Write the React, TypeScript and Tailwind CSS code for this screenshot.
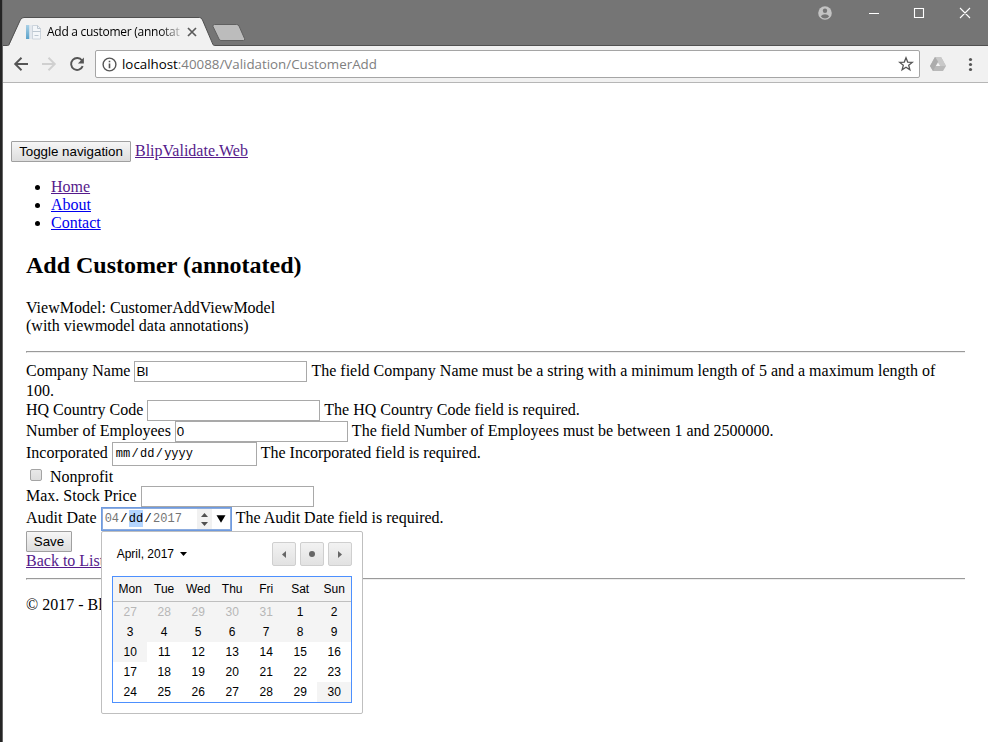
import React from "react";

const SERIF = "font-['Liberation_Serif',serif] text-[16px] leading-[18px]";
const SANS = "font-['Liberation_Sans',sans-serif]";
const MONO = "font-['Liberation_Mono',monospace] text-[12px] leading-[17px]";

const weekdays = ["Mon", "Tue", "Wed", "Thu", "Fri", "Sat", "Sun"];
const days = [
  27, 28, 29, 30, 31, 1, 2, 3, 4, 5, 6, 7, 8, 9, 10, 11, 12, 13, 14, 15, 16, 17,
  18, 19, 20, 21, 22, 23, 24, 25, 26, 27, 28, 29, 30,
];

function TitleBar() {
  return (
    <div className="relative flex h-[46px] shrink-0 bg-[#757575]">
      <svg className="absolute inset-0" width="985" height="46" viewBox="3 0 985 46">
        <path d="M3 45.500H9L20.500 19.500Q21.500 17.500 24 17.500H199Q201.300 17.500 202.200 19.500L213.500 45.500H988V47H3Z" fill="#f1f1f1" />
        <path d="M3 45.500H7.500Q8.500 45.500 9 44.500L20.300 20Q21.400 17.500 24 17.500H199.500Q201.500 17.500 202.500 20L212.800 44.200Q213.300 45.500 214.800 45.500H988" fill="none" stroke="#505050" />
        <path d="M214.500 24.500H236.500Q238.300 24.500 239 26L244.500 38.500Q245.200 40.500 243.500 40.500H221Q219.500 40.500 219 39L213 26.500Q212.300 24.500 214.500 24.500Z" fill="#bcbcbc" stroke="#606060" />
      </svg>
      <div className="relative flex w-[215px] pl-[22px] pt-[23px]">
        <svg width="18" height="18" viewBox="0 0 18 18" className="shrink-0">
          <defs>
            <linearGradient id="page" x1="0" x2="0" y1="0" y2="1">
              <stop offset="0" stopColor="#a9d0e6" />
              <stop offset="1" stopColor="#5aa2ca" />
            </linearGradient>
          </defs>
          <rect x="1" y="2" width="3.500" height="14" fill="url(#page)" />
          <path d="M4.500 2h5v14h-5z" fill="#e3e8ee" />
          <path d="M7.500 2.500h5l3 3v10.500h-8z" fill="#f3f6f9" stroke="#ccd4dc" />
          <path d="M12.500 2.500v3h3M7.500 8.500h8M9.500 12.500h4" fill="none" stroke="#bcc7d1" />
        </svg>
        <span className="ml-[4px] mt-px h-4 w-[134px] overflow-hidden whitespace-nowrap bg-gradient-to-r from-black from-82% to-[#ccc] bg-clip-text font-['Open_Sans',sans-serif] text-[12px] leading-4 tracking-[-0.27px] text-transparent">
          Add a customer (annotat
        </span>
        <svg width="10" height="10" viewBox="0 0 10 10" className="ml-[6px] mt-[4px]">
          <path d="M1 1l8 8M9 1l-8 8" stroke="#5a5a5a" strokeWidth="1.700" />
        </svg>
      </div>
      <svg className="relative ml-auto mr-[17px] mt-[5px]" width="154" height="16" viewBox="817 5 154 16">
        <circle cx="825" cy="13" r="6.800" fill="#c3c3c3" />
        <circle cx="825" cy="10.700" r="2.200" fill="#757575" />
        <path d="M820.800 16.200q1.500-2 4.200-2t4.200 2q-1.500 2.200-4.200 2.200t-4.200-2.200z" fill="#757575" />
        <path d="M869 13.500h10M914.500 8.500h9v9h-9zM960 8l10 10M970 8l-10 10" fill="none" stroke="#fff" strokeWidth="1.100" />
      </svg>
    </div>
  );
}

function Toolbar() {
  return (
    <div className="flex h-[37px] shrink-0 items-start border-b border-[#b6b6b6] bg-[#f1f1f1] pt-[4px]">
      <svg width="92" height="28" viewBox="3 50 92 28" fill="none" strokeWidth="1.900">
        <path d="M28 64H15.500M21.500 57.800L15.200 64l6.300 6.200" stroke="#555" />
        <path d="M42 64h12.500M48.500 57.800l6.300 6.200-6.300 6.200" stroke="#d0d0d0" />
        <path d="M82 60.500A6 6 0 1 0 82.700 66.200" stroke="#555" />
        <path d="M83.900 57.500v6h-6z" fill="#555" />
      </svg>
      <div className="flex h-7 w-[825px] items-center rounded-[2px] border border-[#a5a5a5] bg-white">
        <svg className="ml-[6px]" width="15" height="15" viewBox="0 0 15 15">
          <circle cx="7.500" cy="7.500" r="6.400" fill="none" stroke="#555" strokeWidth="1.400" />
          <path d="M7.500 6.500v4.700M7.500 3.700v1.600" stroke="#555" strokeWidth="1.600" />
        </svg>
        <span className="ml-[5px] whitespace-nowrap font-['Open_Sans',sans-serif] text-[13.333px] leading-5 text-[#808080]">
          <span className="text-black">localhost</span>:40088/Validation/CustomerAdd
        </span>
        <svg className="ml-auto mr-[5px]" width="16" height="16" viewBox="0 0 16 16">
          <path d="M8 1.800l1.700 4.300 4.600.3-3.600 2.900 1.200 4.500L8 11.300l-3.900 2.500 1.200-4.500L1.700 6.400l4.600-.3z" fill="none" stroke="#555" strokeWidth="1.300" />
        </svg>
      </div>
      <svg className="ml-[8px]" width="50" height="28" viewBox="928 50 50 28">
        <path d="M935 57h6l5 9-3 5h-10l-3-5z" fill="#b9b9b9" />
        <path d="M935 57h6l5 9h-6z" fill="#c9c9c9" />
        <path d="M935 57l3 4.500-5 9.500-3-5z" fill="#acacac" />
        <path d="M938 62.500l2.200 3.500h-4.400z" fill="#f4f4f4" />
        <g fill="#555">
          <circle cx="970.500" cy="59.500" r="1.600" />
          <circle cx="970.500" cy="64.500" r="1.600" />
          <circle cx="970.500" cy="69.500" r="1.600" />
        </g>
      </svg>
    </div>
  );
}

function Button({ label, className }: { label: string; className: string }) {
  return (
    <button className={`${SANS} ${className} h-[21px] rounded-[1px] border border-[#a0a0a0] bg-gradient-to-b from-[#f6f6f6] to-[#dddddd] text-center leading-[19px] whitespace-nowrap text-black`}>
      {label}
    </button>
  );
}

function TextBox({ value }: { value?: string }) {
  return (
    <div className={`${SANS} ml-[4px] mr-[4px] h-[21px] w-[173px] shrink-0 border border-[#a9a9a9] bg-white pl-px text-[13.333px] leading-[19px]`}>
      {value}
    </div>
  );
}

function Label({ children, className = "" }: { children: React.ReactNode; className?: string }) {
  return <span className={`mt-px shrink-0 whitespace-nowrap ${className}`}>{children}</span>;
}

function Calendar() {
  return (
    <div className={`${SANS} absolute left-[-1px] top-[23px] h-[183px] w-[262px] rounded-[2px] border border-[#bfbfbf] bg-white px-[10px] pt-[10px] text-[12px] text-black`}>
      <div className="flex h-[24px] items-center">
        <span className="ml-[5px] whitespace-nowrap">April, 2017</span>
        <svg className="ml-[6px]" width="7" height="4" viewBox="0 0 7 4"><path d="M0 0h7L3.500 4z" /></svg>
        <div className="ml-auto flex gap-[4px]">
          {["M14 9v7l-4-3.500z", "", "M10 9v7l4-3.500z"].map((d, i) => (
            <div key={i} className="h-6 w-6 rounded-[2px] border border-[#cfcfcf] bg-gradient-to-b from-[#f2f2f2] to-[#e2e2e2]">
              <svg width="22" height="22" viewBox="1 1 22 22">
                {d ? <path d={d} fill="#666" /> : <circle cx="12" cy="12" r="3" fill="#666" />}
              </svg>
            </div>
          ))}
        </div>
      </div>
      <div className="mt-[10px] h-[127px] w-[240px] border border-[#4d90fe]">
        <div className="grid h-[25px] grid-cols-7 border-b border-[#bfbfbf] bg-[#f4f4f4] text-center leading-[24px]">
          {weekdays.map((d) => <span key={d} className="pl-px">{d}</span>)}
        </div>
        <div className="grid grid-cols-7 text-center leading-5">
          {days.map((d, i) => (
            <span key={i} className={`h-5 pl-px ${i < 15 || i === 34 ? "bg-[#f4f4f4]" : ""} ${i < 5 ? "text-[#b7b7b7]" : ""}`}>{d}</span>
          ))}
        </div>
      </div>
    </div>
  );
}

export default function App() {
  return (
    <div className="flex h-[742px] w-[988px] overflow-hidden bg-white text-black">
      <div className="w-[3px] shrink-0 border-r border-[#666] bg-[#252525]" />
      <div className="flex w-[985px] flex-col">
        <TitleBar />
        <Toolbar />
        <main className={`${SERIF} px-[8px] pt-[58px]`}>
          <div className="flex h-[21px]">
            <Button label="Toggle navigation" className="w-[120px] text-[13.333px]" />
            <a className="ml-[4px] mt-px text-[#551a8b] underline">BlipValidate.Web</a>
          </div>
          <ul className="mt-[16px] list-disc pl-[40px]">
            <li><a className="text-[#551a8b] underline">Home</a></li>
            <li><a className="text-[#0000ee] underline">About</a></li>
            <li><a className="text-[#0000ee] underline">Contact</a></li>
          </ul>
          <div className="px-[15px]">
            <h2 className="mt-[20px] text-[24px] font-bold leading-[27px]">Add Customer (annotated)</h2>
            <p className="mt-[20px]"><span>ViewModel: CustomerAddViewModel</span><br /><span>(with viewmodel data annotations)</span></p>
            <div className="mt-[16px] h-[2px] border-b border-l border-t border-b-[#eee] border-l-[#9a9a9a] border-t-[#9a9a9a]" />
            <div className="mt-[8px] flex h-[21px]">
              <Label>Company Name</Label><TextBox value="Bl" />
              <Label>The field Company Name must be a string with a minimum length of 5 and a maximum length of</Label>
            </div>
            <div className="h-[18px]">100.</div>
            <div className="flex h-[21px]">
              <Label>HQ Country Code</Label><TextBox />
              <Label>The HQ Country Code field is required.</Label>
            </div>
            <div className="flex h-[21px]">
              <Label>Number of Employees</Label><TextBox value="0" />
              <Label>The field Number of Employees must be between 1 and 2500000.</Label>
            </div>
            <div className="flex h-[24px] pt-px">
              <Label>Incorporated</Label>
              <div className={`${MONO} -mt-px ml-[4px] mr-[4px] flex h-[24px] w-[145px] gap-[1.300px] border border-[#a9a9a9] pl-[3px] pt-[3px]`}>
                <span>mm</span><span>/</span><span>dd</span><span>/</span><span>yyyy</span>
              </div>
              <Label>The Incorporated field is required.</Label>
            </div>
            <div className="flex h-[20px]">
              <div className="ml-[4px] mt-[3px] h-[12px] w-[12px] rounded-[2px] border border-[#a4a4a4] bg-gradient-to-b from-[#e8e8e8] to-[#dddddd]" />
              <Label className="ml-[8px] pt-px">Nonprofit</Label>
            </div>
            <div className="flex h-[21px]"><Label>Max. Stock Price</Label><TextBox /></div>
            <div className="flex h-[24px] pt-px">
              <Label>Audit Date</Label>
              <div className={`${MONO} relative -mt-px ml-[4px] mr-[4px] flex h-[24px] w-[131px] items-start gap-[1.300px] border border-[#6e9adf] pl-[3px] pt-[2px] outline-1 -outline-offset-2 outline-[#8cacdf]`}>
                <span className="pt-px text-[#757575]">04</span><span className="pt-px">/</span>
                <span className="h-[17px] bg-[#b4d5ff] leading-[19px]">dd</span><span className="pt-px">/</span><span className="pt-px text-[#757575]">2017</span>
                <svg className="absolute left-[95px] top-px" width="30" height="20" viewBox="0 0 30 20">
                  <path d="M0 0h15v20H0z" fill="#f1f1f1" />
                  <path d="M4 8h7L7.500 4zM4 13h7L7.500 17z" fill="#505050" />
                  <path d="M19.500 6.200h9L24 13.800z" fill="#000" />
                </svg>
                <Calendar />
              </div>
              <Label>The Audit Date field is required.</Label>
            </div>
            <Button label="Save" className="block w-[46px] text-[13.333px]" />
            <div><a className="text-[#551a8b] underline">Back to List</a></div>
            <div className="mt-[8px] h-[2px] border-b border-l border-t border-b-[#eee] border-l-[#9a9a9a] border-t-[#9a9a9a]" />
            <p className="mt-[16px]">© 2017 - Bl</p>
          </div>
        </main>
      </div>
    </div>
  );
}
